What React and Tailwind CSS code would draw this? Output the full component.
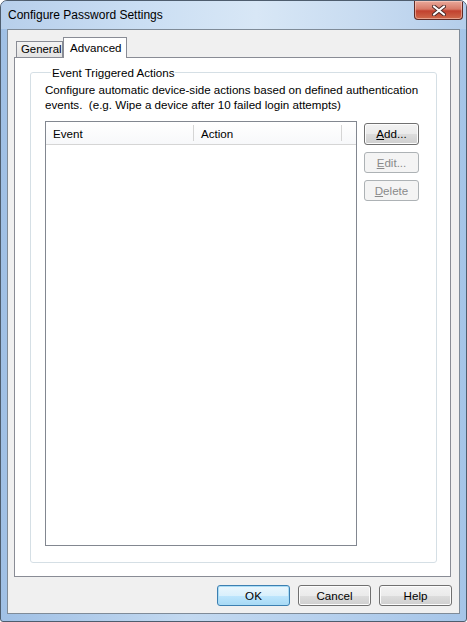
import React from "react";

const font = { fontFamily: '"Liberation Sans", Arial, sans-serif' };

function Btn({ children, disabled, def, className = "" }) {
  let cls =
    "flex items-center justify-center rounded-[3px] border text-[11.6px] leading-none ";
  if (disabled) {
    cls += "border-[#adb2b5] bg-[#f4f4f4] text-[#8a8a8a] ";
  } else if (def) {
    cls +=
      "border-[#3c7fb1] text-black bg-[linear-gradient(#eaf6fd_0%,#d9f0fc_50%,#bee6fd_50%,#a7d9f5_100%)] shadow-[inset_0_0_0_1px_#a9dcf6] ";
  } else {
    cls +=
      "border-[#707070] text-black bg-[linear-gradient(#f2f2f2_0%,#ebebeb_50%,#dddddd_50%,#cfcfcf_100%)] shadow-[inset_0_0_0_1px_#fcfcfc] ";
  }
  return <div className={cls + className}>{children}</div>;
}

export default function App() {
  return (
    <div
      style={font}
      className="w-[467px] h-[622px] flex flex-col border border-[#4e5d6e] rounded-t-[7px] rounded-b-[3px] overflow-hidden bg-[linear-gradient(90deg,#a0c0e5_0%,#c3d9f0_40%,#b6d0ed_70%,#a6c5e8_100%)]"
    >
      {/* Title bar */}
      <div className="h-[28px] flex items-start justify-between bg-[linear-gradient(90deg,#b7cfeb_0%,#cadef3_30%,#d8e7f6_55%,#c6daf0_80%,#b4ceeb_100%)]">
        <div className="pl-[7px] pt-[7px] text-[12px] leading-[15px] text-black">
          Configure Password Settings
        </div>
        <div className="mr-[3px] w-[49px] h-[19px] rounded-b-[4px] border border-t-0 border-[#5e2b26] flex items-center justify-center bg-[linear-gradient(#e9a99b_0%,#d77a68_45%,#c2412f_55%,#cf6a4c_100%)] shadow-[inset_0_0_0_1px_rgba(255,220,210,0.5)]">
          <svg width="14" height="11" viewBox="0 0 14 11">
            <path
              d="M2 1.5 L12 9.5 M12 1.5 L2 9.5"
              stroke="#4a2a28"
              strokeWidth="4"
              strokeLinecap="round"
            />
            <path
              d="M2 1.5 L12 9.5 M12 1.5 L2 9.5"
              stroke="#ffffff"
              strokeWidth="2.2"
              strokeLinecap="round"
            />
          </svg>
        </div>
      </div>

      {/* Frame */}
      <div className="flex-1 px-[6px] pb-[7px] flex flex-col">
        <div className="flex-1 border border-[#7f8b98] bg-[#f0f0f0] flex flex-col pt-[7px] pl-[6px] pr-[8px]">
          {/* Tabs */}
          <div className="h-[20px] flex items-end pl-[2px]">
            <div className="w-[47px] h-[16px] border border-b-0 border-[#898c95] bg-[linear-gradient(#f3f3f3,#e3e3e3)] text-[11.4px] leading-[15px] pl-[4px] text-black whitespace-nowrap overflow-hidden">
              General
            </div>
            <div className="relative z-10 -mb-[1px] w-[64px] h-[21px] border border-b-0 border-[#898c95] bg-white text-[11.6px] leading-[15px] pl-[6px] pt-[2px] text-black">
              Advanced
            </div>
          </div>

          {/* Panel */}
          <div className="h-[520px] border border-[#898c95] bg-white flex flex-col pl-[15px] pr-[13px] pt-[14px] pb-[13px]">
            <div className="flex-1 flex flex-col border border-[#d5dfe5] rounded-[3px] pl-[14px] pr-[17px] pb-[16px] min-h-0">
              <div className="self-start -mt-[8px] ml-[6px] px-[1px] bg-white text-[11.6px] leading-[15px] text-black">
                Event Triggered Actions
              </div>
              <div className="mt-[2px] text-[11.6px] leading-[15px] text-black whitespace-nowrap">
                Configure automatic device-side actions based on defined authentication
                <br />
                events.&nbsp; (e.g. Wipe a device after 10 failed login attempts)
              </div>
              <div className="flex-1 flex gap-[7px] mt-[9px] min-h-0">
                <div className="flex-1 border border-[#828790] bg-white flex flex-col">
                  <div className="h-[23px] flex items-stretch border-b border-[#d5d5d5] bg-[linear-gradient(#ffffff,#f7f8fa)] text-[11.6px] text-black">
                    <div className="w-[148px] flex items-center pl-[7px] pt-[1px] border-r border-[#d5d5d5] my-[3px]">
                      Event
                    </div>
                    <div className="w-[148px] flex items-center pl-[7px] pt-[1px] border-r border-[#d5d5d5] my-[3px]">
                      Action
                    </div>
                    <div className="flex-1" />
                  </div>
                  <div className="flex-1" />
                </div>
                <div className="w-[55px] flex flex-col gap-[7px] pt-[2px]">
                  <Btn className="h-[22px]">
                    <span><u>A</u>dd...</span>
                  </Btn>
                  <Btn disabled className="h-[21px]">
                    <span><u>E</u>dit...</span>
                  </Btn>
                  <Btn disabled className="h-[21px]">
                    <span><u>D</u>elete</span>
                  </Btn>
                </div>
              </div>
            </div>
          </div>

          {/* Bottom buttons */}
          <div className="h-[36px] flex justify-end items-start pt-[8px] gap-[8px]">
            <Btn def className="w-[73px] h-[21px]">OK</Btn>
            <Btn className="w-[73px] h-[21px]">Cancel</Btn>
            <Btn className="w-[73px] h-[21px] -mr-[1px]">Help</Btn>
          </div>
        </div>
      </div>
    </div>
  );
}
